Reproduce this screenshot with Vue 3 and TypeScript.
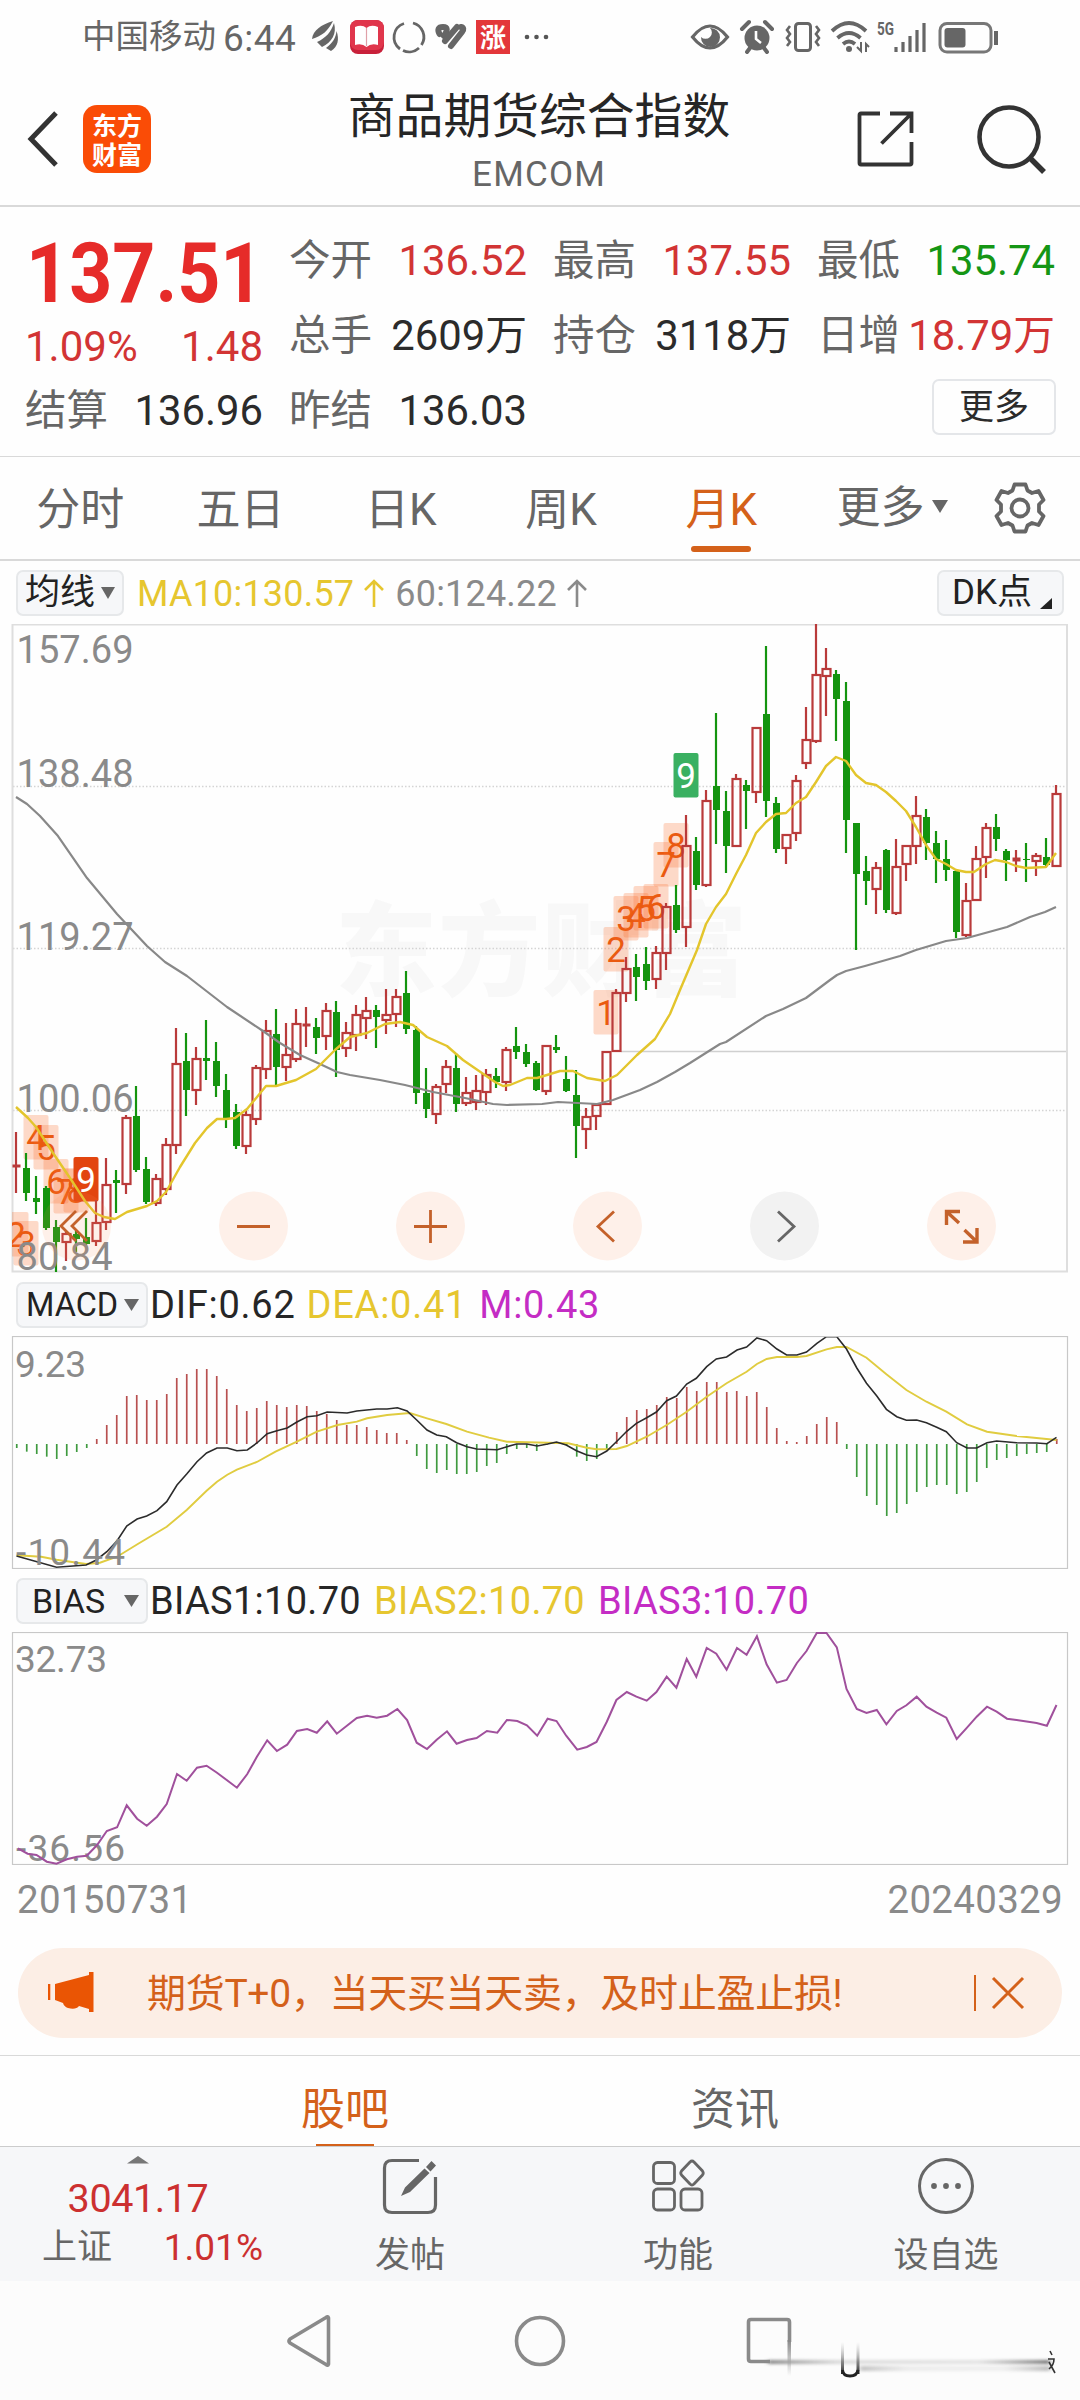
<script setup lang="ts">
type Kind = 'r' | 'g'
type Candle = [Kind, number, number, number, number]

// direction, high, body top, body bottom, low (vertical positions inside the page)
const candleData: Candle[] = [
  ['r', 1132, 1165, 1167, 1193], ['g', 1153, 1168, 1193, 1201], ['g', 1176, 1198, 1202, 1214], ['g', 1186, 1188, 1228, 1230],
  ['g', 1220, 1227, 1242, 1272], ['r', 1231, 1234, 1242, 1261], ['g', 1231, 1234, 1239, 1252], ['g', 1218, 1237, 1244, 1245],
  ['r', 1200, 1223, 1241, 1246], ['r', 1158, 1185, 1222, 1230], ['g', 1170, 1180, 1183, 1213], ['r', 1115, 1118, 1184, 1194],
  ['g', 1086, 1116, 1170, 1172], ['g', 1157, 1169, 1202, 1204], ['r', 1174, 1179, 1203, 1206], ['r', 1138, 1145, 1189, 1195],
  ['r', 1028, 1064, 1145, 1154], ['g', 1033, 1061, 1090, 1116], ['r', 1047, 1059, 1090, 1105], ['g', 1020, 1058, 1061, 1080],
  ['g', 1042, 1061, 1086, 1097], ['g', 1074, 1090, 1119, 1128], ['g', 1104, 1112, 1146, 1149], ['r', 1110, 1115, 1146, 1154],
  ['r', 1065, 1068, 1119, 1125], ['r', 1020, 1031, 1069, 1079], ['g', 1009, 1034, 1067, 1085], ['r', 1023, 1055, 1067, 1081],
  ['r', 1009, 1024, 1059, 1062], ['r', 1007, 1024, 1026, 1047], ['g', 1018, 1027, 1038, 1054], ['r', 1003, 1011, 1036, 1050],
  ['g', 1001, 1012, 1050, 1077], ['r', 1022, 1033, 1048, 1057], ['r', 1005, 1015, 1035, 1051], ['r', 997, 1011, 1018, 1039],
  ['g', 1005, 1010, 1017, 1048], ['r', 989, 1015, 1020, 1034], ['r', 989, 997, 1014, 1027], ['g', 971, 993, 1029, 1034],
  ['g', 1026, 1030, 1093, 1104], ['g', 1068, 1093, 1109, 1118], ['r', 1084, 1087, 1114, 1124], ['r', 1060, 1067, 1084, 1093],
  ['g', 1053, 1068, 1104, 1112], ['r', 1077, 1093, 1103, 1106], ['r', 1075, 1091, 1102, 1110], ['r', 1069, 1075, 1092, 1105],
  ['g', 1068, 1076, 1082, 1088], ['r', 1047, 1050, 1082, 1091], ['g', 1027, 1046, 1052, 1059], ['g', 1044, 1052, 1064, 1067],
  ['g', 1061, 1063, 1090, 1091], ['r', 1045, 1046, 1091, 1095], ['g', 1035, 1047, 1050, 1053], ['g', 1056, 1079, 1091, 1092],
  ['g', 1070, 1095, 1126, 1158], ['r', 1108, 1117, 1129, 1149], ['r', 1104, 1105, 1116, 1130], ['r', 1051, 1052, 1104, 1105],
  ['r', 989, 993, 1051, 1052], ['r', 957, 969, 993, 1002], ['g', 954, 967, 977, 1001], ['g', 947, 964, 981, 990],
  ['r', 946, 953, 979, 989], ['r', 903, 907, 953, 970], ['g', 885, 905, 930, 933], ['r', 815, 846, 927, 947],
  ['g', 837, 851, 885, 890], ['r', 790, 801, 885, 887], ['g', 713, 786, 810, 844], ['g', 791, 811, 846, 873],
  ['r', 774, 779, 846, 847], ['g', 780, 785, 791, 829], ['r', 727, 728, 792, 803], ['g', 646, 714, 801, 817],
  ['g', 797, 803, 849, 853], ['r', 834, 835, 848, 864], ['r', 775, 781, 833, 841], ['r', 707, 740, 763, 769],
  ['r', 624, 675, 741, 743], ['r', 648, 669, 676, 716], ['g', 670, 674, 699, 741], ['g', 682, 701, 820, 853],
  ['g', 823, 823, 874, 950], ['g', 856, 871, 881, 905], ['r', 862, 868, 889, 914], ['g', 849, 850, 910, 913],
  ['r', 839, 867, 913, 915], ['r', 845, 846, 864, 881], ['r', 796, 816, 846, 864], ['g', 809, 817, 843, 860],
  ['g', 831, 843, 859, 883], ['g', 840, 859, 870, 881], ['g', 870, 871, 932, 938], ['r', 883, 901, 935, 937],
  ['r', 846, 859, 900, 901], ['r', 823, 828, 857, 878], ['g', 814, 827, 839, 851], ['g', 849, 851, 860, 881],
  ['r', 850, 858, 861, 872], ['g', 843, 859, 860, 882], ['r', 853, 856, 861, 876], ['g', 838, 857, 865, 867],
  ['r', 785, 794, 866, 867],
]

const candles = candleData.map(([kind, high, top, bottom, low], i) => ({
  x: 16 + i * 10,
  kind,
  high,
  top,
  bottom,
  low,
  hollow: kind === 'r' && bottom - top > 3,
}))

const ma10 =
  '16,1107 28,1118 36,1127 53,1153 70,1178 85,1201 95,1213 104,1217 115,1219 127,1212 147,1206 157,1201 166,1192 180,1167 195,1143 207,1128 217,1119 226,1119 235,1118 247,1109 257,1097 266,1086 276,1086 296,1080 316,1069 335,1050 350,1037 367,1033 385,1024 400,1022 413,1025 427,1037 447,1046 463,1060 495,1082 503,1086 510,1085 527,1078 537,1078 547,1075 560,1071 573,1071 587,1078 605,1081 617,1075 637,1055 655,1039 670,1014 680,990 697,950 706,924 716,907 726,894 736,874 746,855 756,833 766,822 776,814 786,813 796,803 806,797 816,782 826,766 836,757 846,761 856,775 866,783 876,785 886,792 896,801 906,811 916,827 926,845 936,859 946,864 956,870 966,872 974,872 986,864 995,860 1006,862 1016,866 1026,868 1046,867 1056,853'
const ma60 =
  '16,797 27,804 40,816 58,836 87,878 117,914 147,946 165,962 187,976 227,1007 263,1031 280,1043 300,1055 320,1064 337,1072 350,1075 380,1080 405,1085 433,1092 465,1098 493,1104 507,1105 542,1104 558,1102 597,1104 613,1100 640,1090 657,1082 675,1072 690,1063 720,1044 726,1042 766,1016 783,1009 806,998 830,980 837,975 846,971 865,966 900,956 916,950 946,941 967,938 1007,927 1030,917 1045,912 1056,907'

interface Mark { n: string; x: number; y: number; tone: string }
const marks: Mark[] = [
  { n: '2', x: 16, y: 1212, tone: 'soft' }, { n: '3', x: 26, y: 1221, tone: 'soft' },
  { n: '4', x: 36, y: 1115, tone: 'soft' }, { n: '5', x: 46, y: 1125, tone: 'soft' },
  { n: '6', x: 56, y: 1159, tone: 'soft' }, { n: '7', x: 66, y: 1169, tone: 'soft' },
  { n: '8', x: 76, y: 1168, tone: 'soft' }, { n: '9', x: 86, y: 1157, tone: 'red' },
  { n: '1', x: 606, y: 990, tone: 'soft' }, { n: '2', x: 616, y: 927, tone: 'soft' },
  { n: '3', x: 626, y: 896, tone: 'soft' }, { n: '4', x: 636, y: 893, tone: 'soft' },
  { n: '5', x: 646, y: 886, tone: 'soft' }, { n: '6', x: 656, y: 884, tone: 'soft' },
  { n: '7', x: 666, y: 842, tone: 'soft' }, { n: '8', x: 676, y: 823, tone: 'soft' },
  { n: '9', x: 686, y: 753, tone: 'green' },
]

const scaleLabels = [
  { t: '157.69', y: 663, w: 117 }, { t: '138.48', y: 787, w: 117 }, { t: '119.27', y: 950, w: 117 }, { t: '100.06', y: 1112, w: 117 }, { t: '80.84', y: 1270, w: 96 },
]

// sub-chart series are kept on a fine grid: 14.52 units per month, 3 units per pixel vertically
const grid = (pts: string, top: number): string =>
  pts
    .split(' ')
    .map((p) => {
      const [x, y] = p.split(',').map(Number)
      return `${(x / 1.4519).toFixed(1)},${(y / 3 + top).toFixed(1)}`
    })
    .join(' ')

const histValues = [
  534, 545, 552, 560, 567, 558, 546, 534, 507, 465, 435, 378, 375, 390, 390, 372, 324, 312, 297, 297, 318, 357, 405, 423, 414, 393,
  405, 411, 405, 408, 423, 432, 450, 465, 465, 471, 480, 489, 489, 510, 558, 597, 609, 600, 612, 612, 606, 588, 579, 552, 537, 534,
  543, 525, 519, 528, 560, 573, 567, 540, 486, 441, 420, 417, 405, 381, 384, 351, 363, 336, 336, 366, 363, 378, 366, 411, 474, 513,
  516, 498, 462, 441, 456, 537, 621, 678, 705, 738, 729, 702, 666, 651, 645, 645, 672, 666, 636, 594, 570, 564, 558, 552, 549, 546,
  507,
]
const hist = histValues.map((v, i) => ({ x: 17 + i * 10, y: 1270 + v / 3, up: v < 522 }))

const dif = grid(
  '24,858 82,892 125,885 140,870 155,845 170,812 184,768 199,747 213,738 228,722 242,695 257,645 271,612 286,575 300,549 315,534 330,534 344,542 359,540 373,519 388,491 402,482 417,474 431,456 446,440 460,437 475,426 504,429 518,423 547,417 562,417 577,413 591,423 605,450 620,480 634,495 648,500 663,518 678,530 692,537 722,539 736,530 750,522 765,522 780,528 795,522 808,516 822,525 837,542 852,555 866,560 881,543 895,515 910,484 924,460 939,443 953,426 968,392 982,378 997,342 1011,325 1026,290 1040,267 1055,261 1070,240 1084,231 1099,204 1113,212 1128,237 1142,255 1157,255 1171,246 1186,220 1200,200 1215,200 1229,237 1244,294 1258,340 1273,378 1287,418 1302,440 1316,451 1331,450 1345,458 1360,472 1374,485 1389,518 1404,534 1418,534 1433,518 1447,513 1476,518 1505,519 1520,521 1534,502',
  1270,
)
const dea = grid(
  '24,856 60,860 82,869 125,882 145,878 170,860 200,822 242,770 271,720 300,662 315,635 330,614 344,599 373,576 400,545 431,515 460,485 490,465 518,455 533,445 562,435 595,429 620,445 648,462 678,485 710,503 736,515 795,518 825,520 852,533 866,538 895,537 910,528 939,500 968,465 997,425 1026,380 1055,340 1084,305 1099,282 1113,267 1128,261 1157,261 1171,258 1200,238 1215,231 1229,231 1258,263 1287,313 1316,360 1345,395 1374,425 1404,463 1433,485 1476,498 1534,510',
  1270,
)
const bias = grid(
  '26,835 40,851 53,855 68,875 82,881 97,868 112,860 126,857 141,825 155,783 170,772 184,706 199,746 213,767 228,740 242,702 257,612 271,632 286,593 300,587 315,608 344,653 359,612 373,560 388,511 402,543 417,524 431,483 446,477 460,488 475,454 489,491 518,444 533,437 547,443 562,437 577,417 591,450 605,518 620,537 634,509 649,484 663,521 678,510 692,504 707,483 722,488 736,450 751,453 765,466 780,497 795,446 808,453 822,497 838,539 852,531 866,516 881,455 895,390 910,366 924,380 939,392 953,366 968,320 982,353 997,267 1011,320 1026,234 1040,251 1055,299 1070,234 1084,254 1099,199 1113,283 1128,338 1142,330 1157,279 1171,243 1186,188 1200,189 1215,232 1229,357 1244,417 1258,429 1273,420 1287,463 1302,423 1316,406 1331,380 1345,410 1360,428 1374,443 1389,507 1404,473 1418,440 1433,410 1447,425 1462,446 1476,450 1505,459 1520,467 1534,405',
  1570,
)

interface Cell { label: string; value: string; tone: string }
const cells: Cell[] = [
  { label: '今开', value: '136.52', tone: 'up' }, { label: '最高', value: '137.55', tone: 'up' }, { label: '最低', value: '135.74', tone: 'down' },
  { label: '总手', value: '2609万', tone: '' }, { label: '持仓', value: '3118万', tone: '' }, { label: '日增', value: '18.79万', tone: 'up' },
  { label: '结算', value: '136.96', tone: '' }, { label: '昨结', value: '136.03', tone: '' },
]
const periods = ['分时', '五日', '日K', '周K', '月K']
</script>

<template>
  <div class="page">
    <div class="status">
      <span class="carrier">中国移动</span>
      <span class="clock">6:44</span>
      <svg class="st-left" width="250" height="40" viewBox="306 16 250 40">
        <g fill="#666">
          <path d="M312 38C313 29 321 24 333 20C328 30 322 35 312 38Z" />
          <path d="M317 41C326 37 331 31 334 22C337 33 332 41 322 46Z" />
          <path d="M326 47C333 42 336 36 336.500 30C339.500 38 338 46 331 50Z" />
        </g>
        <rect x="350" y="19" width="34" height="34" rx="8" fill="#c8203a" />
        <rect x="350" y="19" width="34" height="30" rx="8" fill="#e0364c" />
        <path d="M355 26Q362 23 366.500 27Q371 23 378 26V44Q371 42 366.500 46Q362 42 355 44Z" fill="#fff" />
        <path d="M366.500 27V45" stroke="#e0a0a8" stroke-width="1.200" />
        <g fill="none" stroke="#666" stroke-width="2.800">
          <path d="M404 22.500A14.500 14.500 0 0 0 400 48" />
          <path d="M403 49.500A14.500 14.500 0 0 0 419 47" />
          <path d="M421.500 44A14.500 14.500 0 0 0 413 22" />
        </g>
        <g fill="none" stroke="#666" stroke-width="6" stroke-linecap="round">
          <path d="M439.500 33Q436 26 443 26Q450 26 444 35" />
          <path d="M445 40L457 26" />
          <path d="M451 45L462 31Q465 27 461 26" />
        </g>
        <rect x="476" y="19" width="34" height="34" fill="#e3373a" />
        <text x="493" y="46" text-anchor="middle" font-size="26" fill="#fff" font-weight="700">涨</text>
        <g fill="#555"><circle cx="527" cy="36" r="2.300" /><circle cx="536.500" cy="36" r="2.300" /><circle cx="546" cy="36" r="2.300" /></g>
      </svg>
      <svg class="st-right" width="320" height="40" viewBox="686 16 320 40">
        <path d="M692.500 36Q710 14 727.500 36Q710 58 692.500 36Z" fill="none" stroke="#666" stroke-width="3.200" />
        <path d="M710 27A9.500 9.500 0 1 1 701 36A5 5 0 1 0 710 27Z" fill="#666" />
        <circle cx="757" cy="37" r="12.500" fill="#666" />
        <path d="M742 28L749 21M772 28L765 21M747 51L750 47M767 51L764 47" stroke="#666" stroke-width="4" stroke-linecap="round" />
        <path d="M756 30V38L761 42" stroke="#fff" stroke-width="2.600" fill="none" />
        <rect x="795.500" y="22.500" width="15" height="27" rx="3" fill="none" stroke="#666" stroke-width="3" />
        <path d="M790 25L787 29L790 33L787 37L790 41L787 45M816 25L819 29L816 33L819 37L816 41L819 45" fill="none" stroke="#666" stroke-width="2.600" />
        <g fill="none" stroke="#666" stroke-width="3.800">
          <path d="M832 30Q849 14 866 30" /><path d="M837.500 37Q849 27 860.500 37" /><path d="M843 43Q849 38 855 43" />
        </g>
        <circle cx="849" cy="48" r="3" fill="#666" />
        <path d="M861 41V50L857 46M866 51V43L869 46" stroke="#666" stroke-width="2" fill="none" />
        <text x="877" y="34" font-size="18" font-weight="700" fill="#666" textLength="17" lengthAdjust="spacingAndGlyphs">5G</text>
        <path d="M896 46V51M903 41V51M910 35V51M917 29V51M924 22V51" stroke="#666" stroke-width="3.200" />
        <rect x="940" y="22.500" width="51" height="28.500" rx="7" fill="none" stroke="#777" stroke-width="3" />
        <rect x="944.500" y="27" width="21" height="19.500" rx="3" fill="#666" />
        <path d="M996 30V44" stroke="#666" stroke-width="4" />
      </svg>
    </div>

    <header class="head">
      <svg class="back" width="32" height="56" viewBox="0 0 32 56"><path d="M29 2L4 28L29 54" fill="none" stroke="#333" stroke-width="5" /></svg>
      <div class="logo"><span>东方</span><span>财富</span></div>
      <div class="titles">
        <div class="title">商品期货综合指数</div>
        <div class="code">EMCOM</div>
      </div>
      <svg class="share" width="60" height="60" viewBox="0 0 60 60">
        <path d="M24 4.500H5Q3.500 4.500 3.500 6V54Q3.500 55.500 5 55.500H54Q55.500 55.500 55.500 54V33M34 4.500H55.500V24M55.500 4.500L25.500 34.500" fill="none" stroke="#333" stroke-width="3.800" />
      </svg>
      <svg class="search" width="72" height="72" viewBox="0 0 72 72">
        <circle cx="33" cy="34" r="29.500" fill="none" stroke="#333" stroke-width="4.600" />
        <path d="M54 55L68 69" stroke="#333" stroke-width="5.500" />
      </svg>
    </header>

    <section class="quote">
      <div class="last">
        <div class="price"><span>137.51</span></div>
        <div class="chg"><span>1.09%</span><span>1.48</span></div>
      </div>
      <div v-for="c in cells" :key="c.label" class="cell">
        <span class="lab">{{ c.label }}</span><span class="val" :class="c.tone">{{ c.value }}</span>
      </div>
      <div class="more-wrap"><span class="more-btn">更多</span></div>
    </section>

    <nav class="periods">
      <div v-for="p in periods" :key="p" class="period" :class="{ on: p === '月K' }"><span>{{ p }}</span></div>
      <div class="period-more">
        <span>更多</span>
        <svg width="16" height="13" viewBox="0 0 16 13"><path d="M0 0H16L8 13Z" fill="#666" /></svg>
      </div>
      <svg class="gear" width="54" height="54" viewBox="-27 -27 54 54">
        <path d="M-5.500 -23.500H5.500L7.500 -17.500L12 -15L18.500 -17L23.500 -8L19 -3.500V3.500L23.500 8L18.500 17L12 15L7.500 17.500L5.500 23.500H-5.500L-7.500 17.500L-12 15L-18.500 17L-23.500 8L-19 3.500V-3.500L-23.500 -8L-18.500 -17L-12 -15L-7.500 -17.500Z" fill="none" stroke="#666" stroke-width="3.800" stroke-linejoin="round" />
        <circle r="8.500" fill="none" stroke="#666" stroke-width="3.800" />
      </svg>
    </nav>

    <div class="ind main-ind">
      <span class="pick avg">均线<svg width="14" height="12" viewBox="0 0 14 12"><path d="M0 0H14L7 12Z" fill="#666" /></svg></span>
      <span class="yl">MA10:130.57</span>
      <svg class="arr" width="20" height="28" viewBox="0 0 20 28"><path d="M10 28V2M1 11L10 2L19 11" fill="none" stroke="#e6c62f" stroke-width="2.600" /></svg>
      <span class="gy">60:124.22</span>
      <svg class="arr" width="20" height="28" viewBox="0 0 20 28"><path d="M10 28V2M1 11L10 2L19 11" fill="none" stroke="#8a8a8a" stroke-width="2.600" /></svg>
      <span class="pick dk">DK点<svg width="12" height="11" viewBox="0 0 12 11"><path d="M12 0V11H0Z" fill="#222" /></svg></span>
    </div>

    <div class="kbox">
      <svg width="1080" height="649" viewBox="0 624 1080 649">
        <defs><clipPath id="plot"><rect x="12" y="624" width="1056" height="649" /></clipPath></defs>
        <text x="335" y="988" font-size="102" font-weight="800" fill="#f8f8f8" textLength="412">东方财富</text>
        <g stroke="#d4d4d4" stroke-width="1.500" stroke-dasharray="1.500 2">
          <path d="M13 786.500H1067" /><path d="M13 948.500H1067" /><path d="M13 1110.500H1067" />
        </g>
        <path d="M621 1051.500H1067" stroke="#d0d0d0" stroke-width="1.300" />
        <rect x="12.500" y="624.500" width="1054.500" height="647" fill="none" stroke="#dedede" stroke-width="2" />
        <g clip-path="url(#plot)">
          <g v-for="(m, i) in marks" :key="i">
            <rect :x="m.x - 12.500" :y="m.y" width="25" height="44.500" rx="2" :class="'mk-' + m.tone" />
            <text :x="m.x" :y="m.y + 35" text-anchor="middle" font-size="35" :class="'mt-' + m.tone">{{ m.n }}</text>
          </g>
          <g v-for="c in candles" :key="c.x" :class="c.kind">
            <template v-if="c.hollow">
              <path :d="`M${c.x} ${c.high}V${c.top}M${c.x} ${c.bottom}V${c.low}`" />
              <rect :x="c.x - 3.500" :y="c.top" width="8" :height="c.bottom - c.top" fill="none" />
            </template>
            <template v-else>
              <path :d="`M${c.x} ${c.high}V${c.low}`" />
              <rect class="solid" :x="c.x - 3" :y="c.top" width="7" :height="c.bottom - c.top" />
            </template>
          </g>
          <polyline :points="ma60" fill="none" stroke="#888" stroke-width="2.200" stroke-linejoin="round" />
          <polyline :points="ma10" fill="none" stroke="#e3c52c" stroke-width="2.400" stroke-linejoin="round" />
        </g>
        <text v-for="s in scaleLabels" :key="s.t" x="16.500" :y="s.y" font-size="38" fill="#8a8a8a" :textLength="s.w">{{ s.t }}</text>
        <circle v-for="x in [76.500, 253.500, 430.500, 607.500, 961.500]" :key="x" :cx="x" cy="1226" r="34.500" fill="#fb8c50" fill-opacity=".12" />
        <circle cx="784.500" cy="1226" r="34.500" fill="#f2f2f2" />
        <g fill="none" stroke="#c4612a" stroke-width="2.800">
          <path d="M76 1211L61 1226L76 1241M87 1211L72 1226L87 1241" />
          <path d="M237 1226.500H270" /><path d="M414 1226.500H447M430.500 1210V1243" />
          <path d="M614 1211.500L598 1226.500L614 1241.500" />
          <path d="M960 1211.500H946.500V1225M946.500 1211.500L959 1223M963 1242H977V1228M977 1242L964.500 1230" stroke-width="3.400" />
        </g>
        <path d="M778 1211.500L794 1226.500L778 1241.500" fill="none" stroke="#666" stroke-width="2.800" />
      </svg>
    </div>

    <div class="ind sub-ind macd">
      <span class="pick sub">MACD<svg width="15" height="12" viewBox="0 0 15 12"><path d="M0 0H15L7.500 12Z" fill="#666" /></svg></span>
      <span class="bk">DIF:0.62</span><span class="yl">DEA:0.41</span><span class="pu">M:0.43</span>
    </div>
    <svg class="chart" width="1080" height="233" viewBox="0 1336 1080 233">
      <g stroke-width="1.700">
        <path v-for="h in hist" :key="h.x" :d="`M${h.x - 0.250} 1444V${h.y}`" :stroke="h.up ? '#b85050' : '#3f9a3f'" />
      </g>
      <polyline :points="dea" fill="none" stroke="#e0cc40" stroke-width="1.900" />
      <polyline :points="dif" fill="none" stroke="#2b2b2b" stroke-width="1.600" />
      <rect x="12.500" y="1336.500" width="1055" height="232" fill="none" stroke="#c8c8c8" stroke-width="1.200" />
      <text x="15" y="1376.500" font-size="37" fill="#8a8a8a" textLength="71">9.23</text>
      <text x="16" y="1565" font-size="37" fill="#8a8a8a" textLength="109">-10.44</text>
    </svg>

    <div class="ind sub-ind">
      <span class="pick sub bi">BIAS<svg width="15" height="12" viewBox="0 0 15 12"><path d="M0 0H15L7.500 12Z" fill="#666" /></svg></span>
      <span class="bk">BIAS1:10.70</span><span class="yl">BIAS2:10.70</span><span class="pu">BIAS3:10.70</span>
    </div>
    <svg class="chart" width="1080" height="233" viewBox="0 1632 1080 233">
      <rect x="12.500" y="1632.500" width="1055" height="232" fill="none" stroke="#c8c8c8" stroke-width="1.200" />
      <text x="15" y="1672" font-size="37" fill="#8a8a8a" textLength="92">32.73</text>
      <text x="16" y="1861" font-size="37" fill="#8a8a8a" textLength="109">-36.56</text>
      <polyline :points="bias" fill="none" stroke="#a0509c" stroke-width="2" />
    </svg>

    <div class="dates"><span>20150731</span><span>20240329</span></div>

    <div class="banner">
      <svg class="horn" width="46" height="42" viewBox="0 0 46 42">
        <path d="M1 12V28" stroke="#ea5504" stroke-width="2.600" />
        <path d="M7 12L41 3V0H45.500V40H41V37L31 34Q28 38 20 36Q16 34.500 15 31L7 28Z" fill="#ea5504" />
      </svg>
      <span class="btxt">期货T+0，当天买当天卖，及时止盈止损!</span>
      <span class="bar"></span>
      <svg class="close" width="34" height="34" viewBox="0 0 34 34"><path d="M2 2L32 32M32 2L2 32" stroke="#d4611a" stroke-width="3" /></svg>
    </div>

    <div class="feeds">
      <div class="feed on">股吧</div>
      <div class="feed">资讯</div>
    </div>

    <div class="tools">
      <div class="idx">
        <svg width="22" height="8" viewBox="0 0 22 8"><path d="M11 0L22 7.500H0Z" fill="#777" /></svg>
        <div class="pt">3041.17</div>
        <div class="row"><span class="nm">上证</span><span class="pc">1.01%</span></div>
      </div>
      <div class="tool">
        <svg width="58" height="58" viewBox="0 0 58 58">
          <path d="M38 3.500H11Q3.500 3.500 3.500 11V48Q3.500 55.500 11 55.500H47Q54.500 55.500 54.500 48V20" fill="none" stroke="#666" stroke-width="3.200" />
          <path d="M50.500 4L55 8.500L49.500 14.500L45 10ZM43.500 11.500L48.500 16L29 35L20 39L24 30.500Z" fill="#666" />
        </svg>
        <span>发帖</span>
      </div>
      <div class="tool">
        <svg width="58" height="58" viewBox="0 0 58 58" fill="none" stroke="#666" stroke-width="2.800">
          <rect x="4.500" y="5.500" width="21" height="21" rx="4" /><rect x="4.500" y="32" width="21" height="21" rx="4" /><rect x="32" y="32" width="21" height="21" rx="4" />
          <path d="M41 5Q43 3 45 5L53.500 14Q55 16 53.500 18L45 27Q43 29 41 27L32.500 18Q31 16 32.500 14Z" />
        </svg>
        <span>功能</span>
      </div>
      <div class="tool">
        <svg width="58" height="58" viewBox="0 0 58 58">
          <circle cx="29" cy="29" r="26.500" fill="none" stroke="#666" stroke-width="3" />
          <g fill="#666"><circle cx="17" cy="29" r="2.900" /><circle cx="29" cy="29" r="2.900" /><circle cx="41" cy="29" r="2.900" /></g>
        </svg>
        <span>设自选</span>
      </div>
    </div>

    <svg class="sysnav" width="1080" height="119" viewBox="0 2281 1080 119">
      <defs>
        <linearGradient id="sm" x1="0" x2="1"><stop offset="0" stop-color="#888" /><stop offset=".25" stop-color="#d4d4d4" stop-opacity=".8" /><stop offset=".75" stop-color="#ddd" stop-opacity=".8" /><stop offset="1" stop-color="#777" /></linearGradient>
        <linearGradient id="dn" x1="0" x2="0" y1="0" y2="1"><stop offset="0" stop-color="#999" stop-opacity="0" /><stop offset="1" stop-color="#222" /></linearGradient>
        <linearGradient id="fd" x1="0" x2="0" y1="0" y2="1"><stop offset="0" stop-color="#888" /><stop offset="1" stop-color="#888" stop-opacity="0" /></linearGradient>
        <filter id="haze" x="-5%" y="-200%" width="110%" height="500%"><feGaussianBlur stdDeviation="2 1.600" /></filter>
      </defs>
      <g fill="none" stroke="#8a8a8a" stroke-width="3.600" stroke-linejoin="round">
        <path d="M328.500 2318V2364Q328 2366 326 2364.500L290 2343Q288 2341 290 2339L326 2317.500Q328 2316 328.500 2318Z" />
        <circle cx="540" cy="2341" r="23.500" />
        <path d="M789.500 2342V2322Q789.500 2319.500 787 2319.500H751Q748.500 2319.500 748.500 2322V2359Q748.500 2361.500 751 2361.500H770" />
      </g>
      <rect x="787.500" y="2340" width="3.500" height="36" fill="url(#fd)" />
      <rect x="768" y="2360" width="282" height="4" fill="url(#sm)" filter="url(#haze)" />
      <rect x="860" y="2366" width="190" height="5" fill="url(#sm)" opacity=".5" filter="url(#haze)" />
      <rect x="841" y="2342" width="3" height="32" fill="url(#dn)" />
      <rect x="856.500" y="2342" width="3" height="32" fill="url(#dn)" />
      <path d="M842.500 2370Q843 2376 850 2376T858 2370" fill="none" stroke="#222" stroke-width="3" />
      <path d="M1050 2351L1052 2355M1048 2359H1054Q1054 2365 1049 2369M1049 2362L1055 2373" fill="none" stroke="#333" stroke-width="1.600" />
    </svg>
  </div>
</template>

<style>
body { margin: 0; background: #fff; }
</style>

<style scoped>
.page { width: 1080px; height: 2400px; overflow: hidden; background: #fefefe; font-family: Roboto, "Noto Sans CJK SC", sans-serif; color: #2b2b2b; display: flex; flex-direction: column; }
.page > * { flex: none; box-sizing: border-box; }
svg { display: block; flex: none; }
span { white-space: nowrap; }
.status { height: 73px; display: flex; align-items: center; padding-left: 82px; color: #666; line-height: 40px; }
.carrier { font-size: 33.500px; width: 141px; padding-top: 1px; }
.clock { font-size: 37px; width: 83px; padding-top: 4px; letter-spacing: .5px; }
.st-left { margin-right: 130px; }
.head { height: 134px; border-bottom: 2px solid #d9d9d9; display: flex; align-items: center; padding: 0 32px 0 27px; }
.logo { width: 68px; height: 68px; margin-left: 24px; border-radius: 14px; background: #fa4c06; color: #fff; font-weight: 700; font-size: 25px; line-height: 29px; display: flex; flex-direction: column; align-items: center; justify-content: center; font-family: "Noto Sans CJK SC", sans-serif; }
.titles { flex: 1; display: flex; flex-direction: column; align-items: center; padding-left: 71px; padding-top: 3px; }
.title { font-size: 47.800px; line-height: 62px; color: #262626; }
.code { font-size: 35px; line-height: 42px; color: #666; margin-top: 6px; letter-spacing: 1.200px; }
.share { margin-right: 60px; }
.quote { height: 250px; border-bottom: 1px solid #d9d9d9; padding: 16px 22px 0 25px; display: grid; grid-template-columns: repeat(4, 238px); column-gap: 26px; grid-template-rows: repeat(3, 75px); }
.last { grid-row: span 2; display: flex; flex-direction: column; }
.price { height: 93px; line-height: 102px; font-size: 84px; font-weight: 700; color: #e62b29; padding-left: 1px; }
.price span { display: inline-block; transform: scaleX(.895); transform-origin: 0 50%; }
.chg { display: flex; justify-content: space-between; font-size: 42px; line-height: 62px; color: #d23434; }
.cell { display: flex; align-items: center; justify-content: space-between; line-height: 60px; }
.lab { font-size: 41.500px; color: #666; }
.val { font-size: 41.800px; color: #2b2b2b; }
.up { color: #d23434; }
.down { color: #159615; }
.more-wrap { grid-column: 4; display: flex; justify-content: flex-end; align-items: center; }
.more-btn { width: 124px; height: 56px; box-sizing: border-box; border: 2px solid #e4e6e9; border-radius: 7px; text-align: center; font-size: 35px; line-height: 53px; margin: 0 -1px 8px 0; }
.periods { height: 104px; border-bottom: 2px solid #d9d9d9; display: flex; align-items: stretch; color: #666; font-size: 44px; line-height: 107px; }
.period { width: 160.300px; display: flex; flex-direction: column; align-items: center; position: relative; }
.on { color: #d4611a; }
.period.on::after { content: ""; position: absolute; bottom: 7px; width: 60px; height: 6px; border-radius: 3px; background: #d4611a; }
.period-more { display: flex; align-items: center; gap: 8px; margin-left: 35px; width: 157px; }
.period-more svg { margin-bottom: 3px; }
.gear { align-self: center; }
.ind { display: flex; align-items: center; line-height: 44px; }
.main-ind { height: 63px; padding: 0 16px; font-size: 36px; }
.pick { box-sizing: border-box; height: 46px; border: 2px solid #e6e8ea; border-radius: 7px; background: #f6f7f9; color: #222; display: flex; align-items: center; }
.avg { width: 108px; padding-left: 7px; gap: 6px; font-size: 35px; margin-right: 13px; }
.yl { color: #e6c62f; }
.gy { color: #8a8a8a; }
.pu { color: #c42cc4; }
.bk { color: #262626; }
.main-ind > .yl, .main-ind > .gy { padding-top: 2px; letter-spacing: .2px; }
.main-ind .arr { margin: 0 11px 0 10px; }
.dk { width: 127px; margin-left: auto; padding-left: 13px; font-size: 35px; gap: 8px; }
.dk svg { margin-top: 22px; }
.kbox { height: 649px; }
.sub-ind { height: 63px; padding-left: 16px; font-size: 38px; letter-spacing: .3px; }
.macd { letter-spacing: .75px; }
.sub-ind .bk { margin-right: 13px; }
.sub-ind .yl { margin-right: 13px; }
.macd .yl { margin-right: 12px; }
.macd .bk { margin-right: 11px; }
.sub { width: 132px; font-size: 32.500px; letter-spacing: 0; padding: 0 7px 0 8px; justify-content: space-between; margin-right: 2px; }
.sub.bi { padding-left: 14px; font-size: 34px; }
.chart text, .kbox text { font-family: Roboto, "Noto Sans CJK SC", sans-serif; }
.r { stroke: #b93a3a; stroke-width: 2.200; }
.g { stroke: #14940f; stroke-width: 2.200; }
.r .solid { fill: #b93a3a; stroke: #b93a3a; stroke-width: 1; }
.g .solid { fill: #14940f; stroke: none; }
.mk-soft { fill: #fa6a28; fill-opacity: .25; }
.mk-red { fill: #e2450f; }
.mk-green { fill: #3ab061; }
.mt-soft { fill: #ea5a10; }
.mt-red, .mt-green { fill: #fff; }
.dates { height: 83px; padding: 0 17px; display: flex; justify-content: space-between; font-size: 38.500px; line-height: 70px; color: #8a8a8a; letter-spacing: .3px; }
.banner { height: 90px; margin: 0 18px 17px; border-radius: 45px; background: #fceee5; color: #d4611a; display: flex; align-items: center; padding-left: 30px; }
.btxt { font-size: 39px; margin-left: 53px; width: 827px; line-height: 60px; padding-top: 2px; letter-spacing: -.3px; }
.bar { width: 1.500px; height: 36px; background: #d4611a; margin-right: 15px; }
.feeds { height: 91px; border-top: 1px solid #d9d9d9; display: flex; padding-left: 150px; font-size: 44px; line-height: 108px; color: #666; }
.feed { width: 390px; text-align: center; position: relative; }
.feed.on { color: #d4611a; }
.feed.on::after { content: ""; position: absolute; left: 166px; bottom: 0; width: 58px; height: 2px; background: #d4611a; }
.tools { height: 135px; border-top: 1px solid #ccc; background: #f6f7f9; display: flex; color: #666; }
.idx { width: 276px; display: flex; flex-direction: column; align-items: center; padding-top: 9px; }
.pt { font-size: 39.500px; line-height: 44px; margin-top: 13px; color: #cc3030; letter-spacing: -.4px; }
.row { width: 221px; margin-left: 29px; display: flex; justify-content: space-between; line-height: 50px; margin-top: 2px; }
.nm { font-size: 35px; }
.pc { font-size: 37px; color: #cc3030; }
.tool { width: 268px; display: flex; flex-direction: column; align-items: center; padding-top: 10px; font-size: 35px; line-height: 50px; }
.tool span { margin-top: 16px; }
.sysnav { background: #fcfcfc; }
</style>
